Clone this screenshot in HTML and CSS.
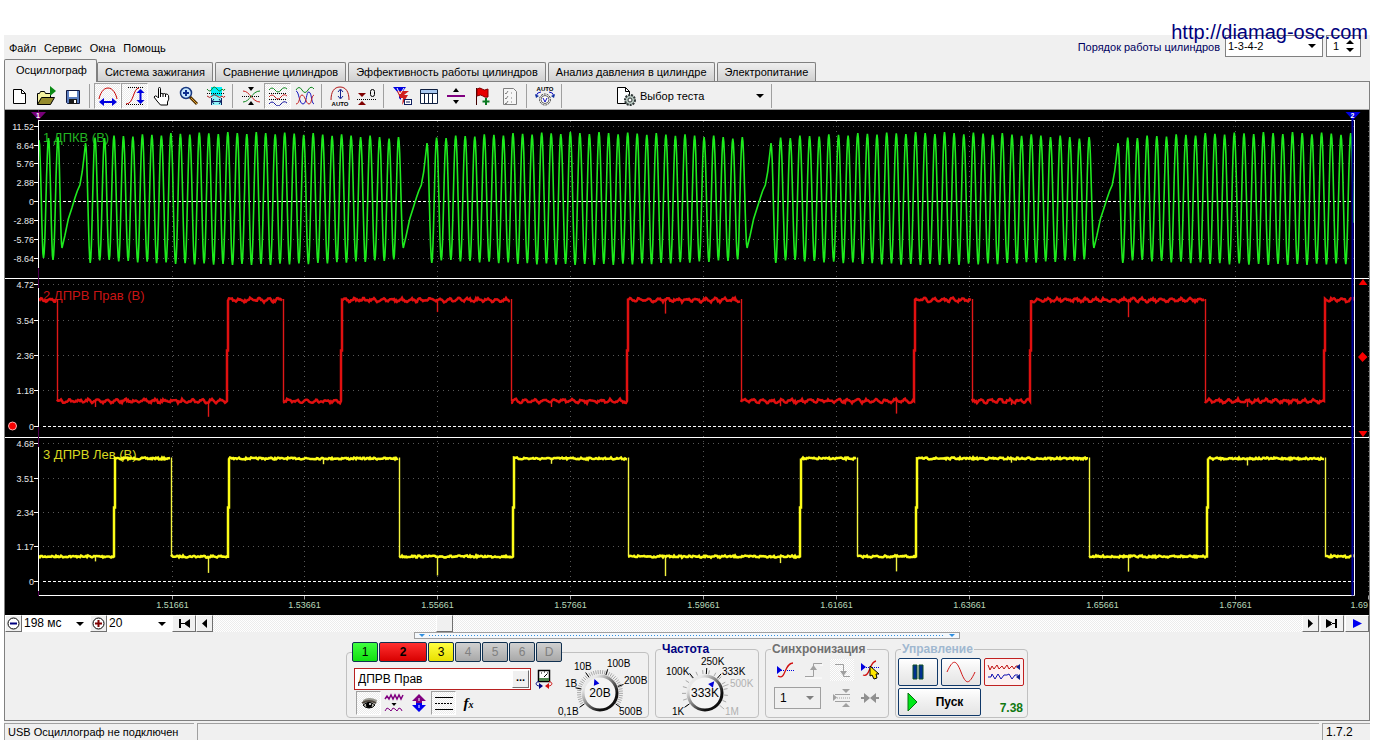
FILE: index.html
```html
<!DOCTYPE html>
<html lang="ru">
<head>
<meta charset="utf-8">
<title>USB Осциллограф</title>
<link rel="stylesheet" href="styles.css">
</head>
<body>
<a class="site" href="#">http://diamag-osc.com</a>
<div class="window">
  <header class="top">
    <nav class="menu">
      <button>Файл</button><button>Сервис</button><button>Окна</button><button>Помощь</button>
    </nav>
    <div class="order">
      <label for="order">Порядок работы цилиндров</label>
      <span class="dd order-dd"><select id="order"><option>1-3-4-2</option></select></span>
      <span class="spin"><input type="text" value="1" aria-label="Цилиндр"><svg width="8" height="14"><path d="M0 5L4 1L8 5zM0 9L4 13L8 9z"/></svg></span>
    </div>
  </header>
  <nav class="tabs">
    <button class="tab active">Осциллограф</button>
    <button class="tab">Система зажигания</button>
    <button class="tab">Сравнение цилиндров</button>
    <button class="tab">Эффективность работы цилиндров</button>
    <button class="tab">Анализ давления в цилиндре</button>
    <button class="tab">Электропитание</button>
  </nav>
  <main class="page">
    <div class="toolbar">
      <button class="tool" aria-label="Новый"><svg viewBox="0 0 20 20"><path d="M4.500 3.500h8l4 4v10h-12z" fill="#fff" stroke="#000"/><path d="M12.500 3.500v4h4" fill="none" stroke="#000"/></svg></button>
      <button class="tool" aria-label="Открыть"><svg viewBox="0 0 20 20"><path d="M1.500 18.500v-11h2l1-2h4l1 2h5v4" fill="#f3f0a0" stroke="#000"/><path d="M1.500 18.500l4-7h13l-4 7z" fill="#948a2c" stroke="#000"/><path d="M14 0l6 5l-6 5z" fill="#0a8a14"/></svg></button>
      <button class="tool" aria-label="Сохранить"><svg viewBox="0 0 20 20"><path d="M3.500 4.500h13v13h-12l-1-1z" fill="#5c7fc0" stroke="#101840"/><path d="M6 5h8v6H6z" fill="#fff"/><path d="M6 13h8v5H6z" fill="#181818"/><path d="M11 14h2v3h-2z" fill="#fff"/></svg></button>
      <i class="sep"></i>
      <button class="tool on" aria-label="Авто X"><svg viewBox="0 0 20 20"><path d="M1 13C2 8 5 2 10 2S18 8 19 13" fill="none" stroke="#c80000"/><path d="M1 16l5-4v3h8v-3l5 4l-5 4v-3H6v3z" fill="#0000e0"/></svg></button>
      <button class="tool on" aria-label="Авто Y"><svg viewBox="0 0 20 20"><path d="M3 1.500h16M1 18.500h18" stroke="#000" stroke-dasharray="1 1"/><path d="M1 18c8 0 7-16 13-16" fill="none" stroke="#c80000"/><path d="M15.500 3l4 4h-3v7h3l-4 4l-4-4h3V7h-3z" fill="#0000e0"/></svg></button>
      <button class="tool" aria-label="Рука"><svg viewBox="0 0 20 20"><path d="M6.500 12V2.500q0-1 1-1t1 1V8q1.500-1.500 2.500 0q1.500-1 2.500 0q2-.5 3 1.500q1 4-1 6.500v3h-7L5 15L2 11q1-2 3-.5z" fill="#fff" stroke="#000"/><path d="M8.500 8v3M11 8v3M13.500 8v3" stroke="#000"/></svg></button>
      <button class="tool" aria-label="Масштаб"><svg viewBox="0 0 20 20"><circle cx="7" cy="7" r="5.500" fill="#c8e8ff" stroke="#183880" stroke-width="1.500"/><path d="M7 4v6M4 7h6" stroke="#103090" stroke-width="2"/><path d="M11 11l7 7" stroke="#503000" stroke-width="3"/><path d="M12 12l6 6" stroke="#e0a030"/></svg></button>
      <button class="tool" aria-label="Выделение"><svg viewBox="0 0 20 20"><path d="M5 1h11v9H5z" fill="#00f0f8"/><path d="M6 10h9v9H6z" fill="#90f4f8"/><path d="M1 3q3 4 5 0t5 0t5 0q2 3 3 0" fill="none" stroke="#108020"/><path d="M1 7.500h18" stroke="#000" stroke-dasharray="1 1"/><path d="M1 10q3 3 5 0t5 0t5 0q2 3 3 0" fill="none" stroke="#b02020"/><path d="M5.500 12v7M15.500 12v7M6 15.500h9M8 13l-2 2.500l2 2.500M13 13l2 2.500l-2 2.500" fill="none" stroke="#102060"/></svg></button>
      <i class="sep"></i>
      <button class="tool" aria-label="Сжать"><svg viewBox="0 0 20 20"><path d="M7 1h6l-3 4zM7 19h6l-3-4z"/><path d="M1 10.500h18" stroke="#000" stroke-dasharray="1 1"/><path d="M2 5c7 0 9 11 17 11" fill="none" stroke="#c82020"/><path d="M2 16c7 0 9-11 17-11" fill="none" stroke="#108820"/></svg></button>
      <button class="tool on" aria-label="Раздельно"><svg viewBox="0 0 20 20"><path d="M1 4q3-4 6 0t6 0t6-1" fill="none" stroke="#108820"/><path d="M1 7.500h18M1 13.500h18" stroke="#000" stroke-dasharray="1 1"/><path d="M1 11q3-4 6 0t6 0t6-1" fill="none" stroke="#c82020"/><path d="M1 18q3-4 6 0t6 0t6-1" fill="none" stroke="#1818a0"/></svg></button>
      <button class="tool" aria-label="Вместе"><svg viewBox="0 0 20 20"><path d="M1 4q3-5 6 0t6 0t6-1" fill="none" stroke="#108820"/><path d="M1 5c3 0 3 13 7 13S11 5 14 6s2 11 5 12" fill="none" stroke="#1818c0"/><path d="M1 18c4 0 3-9 6-9s4 9 7 9s2-8 5-9" fill="none" stroke="#c82020"/></svg></button>
      <i class="sep"></i>
      <button class="tool" aria-label="Авто"><svg viewBox="0 0 20 20"><path d="M1 14C1 6 4 1 10 1s9 5 9 13" fill="none" stroke="#b01818"/><path d="M10.500 4v8M8 6l2.500-3L13 6M8 10l2.500 3l2.500-3" fill="none" stroke="#102090"/><text x="10" y="20" class="auto">AUTO</text></svg></button>
      <button class="tool" aria-label="Ноль"><svg viewBox="0 0 20 20"><path d="M1 7h8l-4 4zM1 19h8l-4-4z" fill="#800000"/><path d="M0 13.500h20" stroke="#000" stroke-dasharray="1 1"/><rect x="13.500" y="3.500" width="4" height="7" rx="2" fill="none" stroke="#000"/></svg></button>
      <i class="sep"></i>
      <button class="tool" aria-label="Фильтр"><svg viewBox="0 0 20 20"><path d="M1 1h13l-5 7v6l-2-2V8z" fill="#0000e0"/><path d="M5 5h12l-5 4h4l-6 10l1-7H8z" fill="#d02020"/><path d="M5 2l3 6l4-6" fill="none" stroke="#fff"/><rect x="12.500" y="13.500" width="7" height="5" fill="#fff" stroke="#102060"/><path d="M14 16h4" stroke="#102060"/></svg></button>
      <button class="tool" aria-label="Таблица"><svg viewBox="0 0 20 20"><path d="M1.500 3.500h17v14h-17z" fill="#fff" stroke="#102040"/><path d="M2 4h16v3H2z" fill="#a8c8f0"/><path d="M2 7.500h16M5.500 7v10M9.500 7v10M13.500 7v10" stroke="#102040"/></svg></button>
      <button class="tool" aria-label="Линейка"><svg viewBox="0 0 20 20"><path d="M7 6h6l-3-4zM7 14h6l-3 4z"/><path d="M1 10h18" stroke="#800080" stroke-width="2"/></svg></button>
      <button class="tool" aria-label="Флаг"><svg viewBox="0 0 20 20"><path d="M3.500 2v17" stroke="#400000"/><path d="M4 3q3-2 5 0t6 0v8q-3 1-5-1t-6 0z" fill="#e80000" stroke="#800000"/><path d="M13 12v7M9.500 15.500h7" stroke="#087820" stroke-width="2"/></svg></button>
      <button class="tool" aria-label="Список"><svg viewBox="0 0 20 20"><path d="M3.500 2.500h10l3 3v13h-13z" fill="#f6f6f6" stroke="#808080"/><path d="M5 7l1 1l2-3M5 12l1 1l2-3M5 17l1 1l2-3M11 7h1M11 12h1M11 16h1" fill="none" stroke="#808080"/></svg></button>
      <i class="sep"></i>
      <button class="tool" aria-label="Автонастройка"><svg viewBox="0 0 20 20"><text x="10" y="5" class="auto">AUTO</text><circle cx="10" cy="13.500" r="5.500" fill="#fff" stroke="#303030" stroke-dasharray="2 1"/><circle cx="10" cy="13.500" r="4" fill="#fff" stroke="#606060"/><path d="M8 12l2 4l2-4" fill="none" stroke="#1010c0"/><path d="M1 10q1-4 5-4M19 10q-1-4-5-4" fill="none" stroke="#1010c0"/><path d="M0 8l1 4l3-2zM20 8l-1 4l-3-2z" fill="#1030a0"/></svg></button>
      <i class="sep"></i>
      <button class="test"><svg width="21" height="20"><path d="M1.500 1.500h8l4 4v12h-12z" fill="#fff" stroke="#000"/><path d="M9.500 1.500v4h4" fill="none" stroke="#000"/><circle cx="14" cy="14" r="5" fill="#b8c8c0" stroke="#303838" stroke-width="2" stroke-dasharray="2 1"/><circle cx="14" cy="14" r="2" fill="#fff" stroke="#303838"/></svg><span>Выбор теста</span><b class="arrow"></b></button>
      <i class="sep"></i>
    </div>
    <div class="chart" id="chart"></div>
    <div class="nav">
      <button class="nb small" aria-label="Уменьшить"><svg width="13" height="13"><circle cx="6.500" cy="6.500" r="5.500" fill="#fff" stroke="#000"/><path d="M3 6.500h7" stroke="#000080" stroke-width="2"/></svg></button>
      <span class="dd nav-dd first"><select aria-label="Развёртка"><option>198 мс</option></select></span>
      <button class="nb small" aria-label="Увеличить"><svg width="13" height="13"><circle cx="6.500" cy="6.500" r="5.500" fill="#fff" stroke="#000"/><path d="M3 6.500h7M6.500 3v7" stroke="#800000" stroke-width="2"/></svg></button>
      <span class="dd nav-dd"><select aria-label="Масштаб"><option>20</option></select></span>
      <button class="nb" aria-label="В начало"><svg width="12" height="9"><path d="M1 0h2v9H1zM12 0v9L7 5.500v-2z M3 4h5v1H3z"/></svg></button>
      <button class="nb small" aria-label="Назад"><svg width="5" height="9"><path d="M5 0v9L0 4.500z"/></svg></button>
      <input class="scroll" type="range" min="0" max="1000" value="208" aria-label="Прокрутка">
      <button class="nb small" aria-label="Вперёд"><svg width="5" height="9"><path d="M0 0v9L5 4.500z"/></svg></button>
      <button class="nb gap" aria-label="В конец"><svg width="12" height="9"><path d="M9 0h2v9H9zM0 0v9L6 5.500v-2z M5 4h4v1H5z"/></svg></button>
      <button class="nb gap" aria-label="Воспроизвести"><svg width="9" height="9"><path d="M0 0v9L9 4.500z" fill="#0000f0"/></svg></button>
    </div>
    <div class="splitter"><b></b><i></i><b></b></div>
    <div class="controls">
      <fieldset class="group channels">
        <legend class="chan-row">
          <button class="ch g">1</button><button class="ch r">2</button><button class="ch y">3</button><button class="ch" disabled>4</button><button class="ch" disabled>5</button><button class="ch" disabled>6</button><button class="ch" disabled>D</button>
        </legend>
        <div class="chan-body">
          <div class="chan-left">
            <div class="name-row">
              <span class="name"><input type="text" value="ДПРВ Прав" aria-label="Имя канала"><button aria-label="Выбрать">...</button></span>
              <svg width="18" height="20"><path d="M3.500 1.500h11v11h-11z" fill="#fff" stroke="#000" stroke-width="1.500"/><path d="M4 9h10v3H4z" fill="#508850"/><path d="M6 4h1M9 3h1M12 4h1M9 8l3-3" stroke="#000"/><path d="M4 12.500C0 13 0 17 5 17" fill="none" stroke="#000080"/><path d="M4 14l4 3l-4 3z" fill="#000080"/><path d="M14 12.500c4 .5 4 4.500-1 4.500" fill="none" stroke="#d01010"/><path d="M14 14l-4 3l4 3z" fill="#d01010"/></svg>
            </div>
            <div class="icon-row">
              <button class="ib on" aria-label="Показать"><svg viewBox="0 0 20 20"><path d="M4 7q6-4 14 0l-1 4q-6-4-13 0z" fill="#989890"/><path d="M4 12q6-5 12 0q-2 3-6 3t-6-3z" fill="#b8b8b0" stroke="#000"/><path d="M3 10q7-4 14 0" fill="none" stroke="#504840" stroke-width="2"/><circle cx="10" cy="12" r="3"/><circle cx="11" cy="11" r="1" fill="#fff"/></svg></button>
              <button class="ib" aria-label="Сглаживание"><svg viewBox="0 0 20 20"><path d="M1 6l2-3l2 3l2-4l2 4l2-4l2 4l2-4l2 4l2-4" fill="none" stroke="#800080" stroke-width="1.500"/><path d="M7.500 10h5L10 13z"/><path d="M1 18l2-3l2 1l2 2l2-3l2 1l2 2l2-3l2 1l1 2" fill="none" stroke="#800080"/></svg></button>
              <button class="ib" aria-label="Инвертировать"><svg viewBox="0 0 20 20"><path d="M10 1l7 7h-4v2H7V8H3z" fill="#800080"/><path d="M3 12h4v-2h6v2h4l-7 7z" fill="#0000f0"/><path d="M10 5v3M10 12v3" stroke="#fff"/></svg></button>
              <button class="ib on" aria-label="Линии"><svg viewBox="0 0 20 20"><path d="M1 4.500h18M1 16.500h18" stroke="#000"/><path d="M1 10.500h18" stroke="#000" stroke-dasharray="2 1"/></svg></button>
              <button class="ib fx" aria-label="Функция"><i>f</i><small>x</small></button>
            </div>
          </div>
          <svg class="knob" id="volt" width="96" height="66" role="img" aria-label="20В"></svg>
        </div>
      </fieldset>
      <fieldset class="group freq"><legend>Частота</legend>
        <svg class="knob" id="rate" width="96" height="66" role="img" aria-label="333K"></svg>
      </fieldset>
      <fieldset class="group sync"><legend>Синхронизация</legend>
        <div class="sync-grid">
          <button class="sb" aria-label="Уровень"><svg viewBox="0 0 20 20"><path d="M2 6v8l5-4z" fill="#0000e0"/><path d="M2 10.500h17" stroke="#0000e0" stroke-dasharray="1 1"/><path d="M3 16c8 5 6-13 15-13" fill="none" stroke="#d01010" stroke-width="1.300"/></svg></button>
          <button class="sb" disabled aria-label="Фронт"><svg viewBox="0 0 20 20"><path d="M1 16.500h8.500v-13H18" fill="none" stroke="#a0a0a0"/><path d="M2 18h16M16 5h3" stroke="#fff"/><path d="M6 10h7L9.500 5z" fill="#a0a0a0"/></svg></button>
          <button class="sb hatch" disabled aria-label="Спад"><svg viewBox="0 0 20 20"><path d="M3 4.500h8.500v12H18" fill="none" stroke="#a0a0a0"/><path d="M8 11h7l-3.500 5z" fill="#a0a0a0"/></svg></button>
          <button class="sb" aria-label="Авто"><svg viewBox="0 0 20 20"><path d="M1 3v8l5-4z" fill="#0000e0"/><path d="M2 7.500h17" stroke="#0000e0" stroke-dasharray="1 1"/><path d="M3 15c7 3 6-13 13-14" fill="none" stroke="#d01010" stroke-width="1.300"/><path d="M10 6v10l2-1l2 4l3-1l-1-4h3z" fill="#ffe800" stroke="#000"/></svg></button>
          <span class="dd sync-dd"><select aria-label="Канал"><option>1</option></select></span>
          <button class="sb" disabled aria-label="Гистерезис"><svg viewBox="0 0 20 20"><path d="M1 6v7l4-3.500zM10 1h8l-4 4zM10 19h8l-4-4z" fill="#a0a0a0"/><path d="M3 6.500h15M3 13.500h15" stroke="#a0a0a0"/><path d="M5 10h13" stroke="#a0a0a0" stroke-dasharray="1 1"/></svg></button>
          <button class="sb" disabled aria-label="Сжать"><svg viewBox="0 0 20 20"><path d="M1 9h3V5l6 5l-6 5v-4H1zM19 9h-3V5l-6 5l6 5v-4h3z" fill="#909090"/></svg></button>
        </div>
      </fieldset>
      <fieldset class="group run"><legend>Управление</legend>
        <div class="run-grid">
          <button class="rb" aria-label="Пауза"><svg width="12" height="16"><path d="M1 1h4v14H1zM7 1h4v14H7z" fill="#003090" stroke="#105020"/></svg></button>
          <button class="rb" aria-label="Синус"><svg width="32" height="22"><path d="M2 11C8-2 11-2 16 11s8 13 14 0" fill="none" stroke="#d01818"/></svg></button>
          <button class="rb red" aria-label="Запись"><svg width="34" height="22"><path d="M1 4l2 5l2-4l2 3l3-4l2 4l3-3l2 3l3-4l2 4l3-3l2 3l2-3h2" fill="none" stroke="#c01010"/><path d="M1 16h3l1-3l3 5l3-5l3 5l3-4h3l2-1l3 5l3-4h3" fill="none" stroke="#1010b0"/><path d="M33 3v6l-4-3zM33 13v6l-4-3z" fill="#102090"/></svg></button>
          <button class="rb start"><svg width="12" height="20"><path d="M1 1v18l9-9z" fill="#00e818" stroke="#087010"/></svg><span>Пуск</span></button>
          <output>7.38</output>
        </div>
      </fieldset>
    </div>
  </main>
  <footer class="status"><span class="s1">USB Осциллограф не подключен</span><span class="s2"></span><span class="s3">1.7.2</span></footer>
</div>
<script src="chart.js"></script>
</body>
</html>
```

FILE: styles.css
```css
* { box-sizing: border-box; }
body {
  margin: 0;
  min-height: 100vh;
  display: flex;
  padding: 35px 12px 4px 4px;
  background: #fff;
  color: #000;
  font: 11px/13px "Liberation Sans", Arial, sans-serif;
}
button, input, select { font: inherit; color: inherit; margin: 0; }
button { padding: 0; border: 0; background: none; }
select { appearance: none; border: 0; background: none; width: 100%; padding: 0 14px 0 2px; font-size: 12px; border-radius: 0; }
svg { display: block; flex: none; }
.site {
  position: absolute;
  right: 14px;
  top: 20px;
  font-size: 20px;
  line-height: 24px;
  color: #00007c;
  text-decoration: none;
  z-index: 2;
}
.window { flex: 1; min-width: 0; display: flex; flex-direction: column; background: #f0f0f0; }

.top { display: flex; justify-content: space-between; height: 25px; }
.menu { display: flex; gap: 8px; padding: 6px 0 0 5px; }
.menu button { height: 14px; line-height: 14px; }
.order { display: flex; align-items: flex-start; padding-right: 9px; }
.order label { color: #000060; padding: 6px 5px 0 0; }
.dd { position: relative; display: flex; align-items: center; }
.dd::after, .arrow {
  content: "";
  border: 4px solid transparent;
  border-top-color: #000;
  border-bottom: 0;
}
.dd::after { position: absolute; right: 6px; pointer-events: none; }
.order-dd { width: 98px; height: 22px; border: 1px solid #808080; background: #fff; margin-right: 3px; }
.order-dd select { font-size: 11px; }
.spin { display: flex; align-items: center; width: 35px; height: 22px; border: 1px solid #808080; background: #fff; }
.spin input { width: 19px; border: 0; padding: 0 0 0 6px; background: none; }

.tabs { display: flex; align-items: flex-end; gap: 2px; height: 21px; }
.tab {
  height: 19px;
  padding: 1px 7px 0;
  border: 1px solid #808080;
  border-bottom: 0;
  border-radius: 2px 2px 0 0;
  background: linear-gradient(#efefef, #d0d0d0);
  white-space: nowrap;
}
.tab.active { position: relative; height: 23px; margin: 0 -2px -1px 0; padding: 0 9px 2px 11px; background: #f0f0f0; }

.page { flex: 1; display: flex; flex-direction: column; border: 1px solid #808080; min-width: 0; }
.toolbar { display: flex; align-items: center; height: 28px; border-bottom: 1px solid #a0a0a0; }
.tool { display: flex; align-items: center; justify-content: center; width: 27px; height: 26px; }
.tool svg { width: 20px; height: 20px; }
.on, .hatch { background: repeating-conic-gradient(#fff 0 25%, #eaeaea 0 50%) 0 0 / 2px 2px; }
.tool.on, .ib.on { border: 1px solid; border-color: #a0a0a0 #fff #fff #a0a0a0; }
.auto { font: bold 6px "Liberation Sans", sans-serif; text-anchor: middle; }
.sep { width: 8px; height: 24px; border-left: 1px solid #a0a0a0; margin-left: 3px; margin-right: -3px; }
.test { display: flex; align-items: center; width: 202px; padding-left: 50px; height: 24px; }
.test svg { margin-right: 3px; }
.test span { flex: 1; text-align: left; padding-top: 1px; }
.test .arrow { margin-right: 4px; }

.chart { flex: 1; min-height: 300px; background: #000; overflow: hidden; }
.axis { font-size: 9px; fill: #e8e8e8; }
.time { font-size: 9px; fill: #b8d8b8; }
.title { font-size: 13px; }
.mark { font-size: 7px; font-weight: bold; fill: #fff; }

.nav { display: flex; height: 17px; }
.nb {
  display: flex; align-items: center; justify-content: center;
  width: 24px; height: 17px; background: #f0f0f0;
  border: 1px solid; border-color: #fff #707070 #707070 #fff;
}
.nb.small { width: 17px; }
.nb.gap { margin-left: 1px; }
.nav-dd { width: 65px; background: #fff; }
.nav-dd.first { width: 68px; }
.scroll {
  appearance: none; flex: 1; min-width: 0; height: 17px;
  background: repeating-conic-gradient(#fff 0 25%, #ececec 0 50%) 0 0 / 2px 2px;
}
.scroll::-webkit-slider-thumb {
  appearance: none; width: 17px; height: 17px; background: #f0f0f0; border-radius: 0;
  border: 1px solid; border-color: #fff #707070 #707070 #fff;
}

.splitter { align-self: center; display: flex; align-items: center; gap: 4px; width: 546px; height: 7px; border: 1px solid #a0a0a0; padding: 0 4px; background: #f4f8fc; }
.splitter i { flex: 1; height: 1px; background: repeating-linear-gradient(90deg, #3090e0 0 1px, transparent 1px 3px); }
.splitter b { border: 3px solid transparent; border-top-color: #3090e0; border-bottom: 0; }

.controls { display: flex; justify-content: center; gap: 6px; padding: 3px 0 2px; }
.group { margin: 0; padding: 0; border: 1px solid #c0c0c0; border-radius: 4px; height: 76px; min-width: 0; }
.group legend { font-weight: bold; font-size: 12px; line-height: 14px; height: 14px; padding: 0 1px; margin-left: 5px; }
.channels { width: 303px; }
.group .chan-row { display: flex; gap: 1px; height: 20px; padding: 0; margin-left: 5px; font-weight: normal; }
.ch {
  width: 26px; height: 20px; border: 1px solid #103050; border-radius: 2px;
  background: linear-gradient(#d0d0d0, #a8a8a8); font-size: 12px; color: #000;
}
.ch:disabled { color: #808080; }
.ch.g { background: linear-gradient(#40ff40, #10e010); }
.ch.r { width: 48px; background: linear-gradient(#ff3030, #d80000); font-weight: bold; }
.ch.y { background: linear-gradient(#ffff40, #e8e000); }
.chan-body { display: flex; }
.chan-left { width: 207px; padding: 6px 0 0 7px; }
.name-row { display: flex; gap: 4px; height: 22px; align-items: center; }
.name { display: flex; width: 177px; height: 22px; border: 1px solid #b82020; background: #fff; padding: 1px; }
.name input { flex: 1; min-width: 0; border: 0; padding: 0 2px; background: none; font-size: 12px; }
.name button { width: 17px; background: #f0f0f0; border: 1px solid; border-color: #fff #707070 #707070 #fff; line-height: 8px; padding-bottom: 5px; font-weight: bold; }
.icon-row { display: flex; padding: 1px 0 0 2px; }
.ib { display: flex; align-items: center; justify-content: center; width: 25px; height: 24px; }
.ib svg { width: 20px; height: 20px; }
.fx { font: bold 15px "Liberation Serif", serif; font-style: italic; }
.fx small { font-size: 10px; padding-top: 3px; }
.knob { overflow: visible; }
.channels .knob { margin-top: -6px; }
.knob text { font-size: 10px; }
.knob .value { font-size: 12px; }
.freq { width: 104px; }
.freq legend { color: #000080; }
.sync { width: 124px; }
.sync legend { color: #707070; }
.run { width: 133px; }
.run legend { color: #a0b8d0; }
.sync-grid { display: grid; grid-template-columns: 30px 28px 28px 28px; grid-template-rows: 28px 28px; align-items: center; justify-content: center; }
.sb { display: flex; align-items: center; justify-content: center; width: 24px; height: 22px; justify-self: center; }
.sb svg { width: 20px; height: 20px; }
.sync-dd { grid-column: 1 / 3; width: 47px; height: 22px; margin-left: 4px; border: 1px solid #a0a0a0; }
.sync-dd select { padding-left: 5px; }
.sync-dd::after { border-top-color: #808080; }
.run-grid { display: grid; grid-template-columns: 40px 40px 40px; grid-template-rows: 28px 28px; gap: 2px 3px; padding: 2px; }
.rb { display: flex; align-items: center; justify-content: center; border: 1px solid #103868; border-radius: 2px; background: linear-gradient(#fff, #f0f0f0 50%, #e4e4e4); }
.rb.red { border-color: #c02020; background: #fdf0f0; }
.rb.start { grid-column: 1 / 3; font-weight: bold; font-size: 12px; justify-content: flex-start; padding-left: 8px; }
.start span { flex: 1; }
.run output { color: #107810; font-weight: bold; font-size: 12px; align-self: center; text-align: right; padding: 12px 1px 0 0; }

.status { display: flex; gap: 3px; height: 19px; padding-top: 2px; }
.status span { border-top: 1px solid #a0a0a0; border-left: 1px solid #a0a0a0; padding: 2px 3px 0; }
.s1 { width: 190px; white-space: nowrap; }
.s2 { flex: 1; }
.s3 { width: 48px; font-size: 12px; }
```

FILE: chart.js
```javascript
const NS = "http://www.w3.org/2000/svg";

function add(parent, tag, attrs, text) {
  const e = document.createElementNS(NS, tag);
  for (const k in attrs) e.setAttribute(k, attrs[k]);
  if (text !== undefined) e.textContent = text;
  parent.appendChild(e);
  return e;
}

const PANES = [
  { title: "1 ДПКВ (В)", color: "#22b422", top: 10, ty: 32,
    ticks: [["11.52", 16], ["8.64", 35], ["5.76", 53], ["2.88", 72], ["0", 91], ["-2.88", 110], ["-5.76", 129], ["-8.64", 148]] },
  { title: "2 ДПРВ Прав (В)", color: "#c81414", top: 168, ty: 190,
    ticks: [["4.72", 174], ["3.54", 210], ["2.36", 245], ["1.18", 280], ["0", 316]] },
  { title: "3 ДПРВ Лев (В)", color: "#d8d820", top: 327, ty: 349,
    ticks: [["4.68", 333], ["3.51", 368], ["2.34", 402], ["1.17", 436], ["0", 471]] }
];
const TIMES = ["1.51661", "1.53661", "1.55661", "1.57661", "1.59661", "1.61661", "1.63661", "1.65661", "1.67661", "1.69"];

// Crankshaft sensor: 33 equal teeth, then a long ramp over the missing ones.
function crank() {
  const pts = [];
  // Half a tooth as a cosine arc down or up to the next extreme.
  const arc = (x, y) => {
    const [px, py] = pts[pts.length - 1];
    for (let i = 1; i <= 8; i++) pts.push([px + (x - px) * i / 8, py + (y - py) * (1 - Math.cos(Math.PI * i / 8)) / 2]);
  };
  const starts = [80.5, 422, 766, 1113, 1462];
  pts.push([34, 30]);
  [[38.5, 148], [43.5, 28], [48, 150], [53, 27], [57, 138]].forEach(p => arc(p[0], p[1]));
  starts.forEach((s, g) => {
    const v = pts[pts.length - 1][0];
    [[.12, 126], [.27, 109], [.42, 98], [.55, 88], [.65, 81], [.76, 75], [.86, 62], [.93, 48]].forEach(p => pts.push([v + (s - v) * p[0], p[1]]));
    pts.push([s, 33]);
    if (g === starts.length - 1) return;
    const step = (starts[g + 1] - s) / 36;
    for (let i = 0; i < 34; i++) {
      const swell = Math.sin(Math.PI * Math.min(i, 33) / 33);
      if (i > 0) arc(s + i * step, 28 - swell * 5 + (i % 3) - 1);
      arc(s + (i + .5) * step, i === 0 ? 153 : i === 33 ? 138 : 149 + swell * 5 + (i % 2));
    }
  });
  return pts.filter(p => p[0] <= 1349);
}

// Camshaft sensor: square levels with ripple, noise and ignition spikes.
// Falling edges are kept apart because they are drawn thinner.
function cam(edges, first, hi, lo, ripple, noise, spikes) {
  let seed = 7, level = first, k = 0, run = [];
  const rnd = () => (seed = (seed * 16807) % 2147483647) / 2147483647;
  const runs = [run], thin = [];
  for (let x = 34; x <= 1349; x++) {
    if (k < edges.length && x >= edges[k]) {
      if (level) {
        thin.push([[x + .5, hi - 1], [x + .5, lo]]);
        runs.push(run = []);
      } else {
        const mid = (hi + lo) / 2;
        run.push([x, lo], [x, mid], [x + 1, mid], [x + 1, hi]);
        x++;
      }
      level = !level;
      k++;
    }
    const y = (level ? hi : lo) + Math.sin(x / 9.5 * 2 * Math.PI) * ripple + (rnd() - .5) * noise;
    run.push([x, y]);
    if (spikes[x]) thin.push([[x + .5, y], [x + .5, y + spikes[x]]]);
  }
  return { runs, thin };
}
const RED = cam([52, 222, 278, 336, 506, 622, 736, 909, 967, 1025, 1200, 1319], true, 190, 291, 1.3, 2.2,
  { 90: 6, 203: 14, 432: 12, 546: 5, 660: 14, 775: 5, 891: 15, 1006: 5, 1123: 16, 1242: 7 });
const YELLOW = cam([109, 166, 223, 394, 508, 623, 795, 852, 911, 1084, 1202, 1320], false, 348.5, 446.5, .2, 1.8,
  { 90: 5, 203: 16, 318: 6, 432: 19, 546: 5, 660: 20, 775: 6, 891: 15, 1006: 5, 1123: 15, 1242: 7 });
const TRACES = [
  { color: "#1eea1e", width: 1.6, runs: [crank()] },
  { color: "#e01010", width: 2.5, runs: RED.runs },
  { color: "#e01818", width: 1.4, runs: RED.thin },
  { color: "#fcfc18", width: 2.5, runs: YELLOW.runs },
  { color: "#f4f440", width: 1.4, runs: YELLOW.thin }
];

function draw() {
  const box = document.getElementById("chart");
  box.textContent = "";
  const W = box.clientWidth, H = box.clientHeight;
  const kx = (W - 49) / 1315, ky = H / 505;
  const X = x => 34 + (x - 34) * kx, Y = y => y * ky;
  const svg = add(box, "svg", { role: "img", "aria-label": "Осциллограмма", width: W, height: H });
  const R = Math.round(X(1349)) + .5, B = Math.round(Y(485)) + .5;
  const line = (x1, y1, x2, y2, stroke, extra) => add(svg, "path", Object.assign({ d: `M${x1} ${y1}L${x2} ${y2}`, stroke, fill: "none" }, extra));

  TIMES.forEach((t, i) => {
    const x = Math.round(X(166.5 + i * 132.9)) + .5, last = i === TIMES.length - 1;
    line(x, Y(11), x, B, "#585858", { "stroke-dasharray": "1 4" });
    line(x, B, x, B + 4, "#a0a0a0");
    add(svg, "text", { x: last ? W - 1 : x, y: B + 12, class: "time", "text-anchor": last ? "end" : "middle" }, t);
  });
  PANES.forEach(p => {
    p.ticks.forEach(([t, v]) => {
      const y = Math.round(Y(v)) + .5, zero = t === "0";
      line(38, y, R, y, zero ? "#fff" : "#585858", { "stroke-dasharray": zero ? "3 2" : "1 4" });
      line(29, y, 34, y, "#fff");
      add(svg, "text", { x: 29, y: y + 3, class: "axis", "text-anchor": "end" }, t);
    });
    const y = Math.round(Y(p.top)) + .5;
    line(p.top === 10 ? 33 : 0, y, p.top === 10 ? R : W, y, "#fff");
    add(svg, "text", { x: 38, y: Y(p.ty), class: "title", fill: p.color }, p.title);
  });
  TRACES.forEach(t => t.runs.forEach(run => add(svg, "polyline", {
    points: run.map(p => X(p[0]).toFixed(1) + "," + Y(p[1]).toFixed(1)).join(" "),
    fill: "none", stroke: t.color, "stroke-width": t.width
  })));
  line(33.5, Y(10), 33.5, B, "#fff");
  line(33, B, R, B, "#fff");
  line(R, Y(10), R, B, "#fff");
  line(R - 2, Y(5), R - 2, B, "#0000a0", { "stroke-width": 2 });
  [[0, 10], [158, 178], [317, 337], [481, 486]].forEach(s => line(33.5, Y(s[0]), 33.5, Y(s[1]), "#500050"));
  add(svg, "path", { d: "M26 2h15l-7.500 8z", fill: "#780078" });
  add(svg, "text", { x: 33, y: 8, class: "mark", "text-anchor": "middle" }, "1");
  add(svg, "path", { d: `M${R - 9} 2h15l-7.500 8z`, fill: "#0000e0" });
  add(svg, "text", { x: R - 2, y: 8, class: "mark", "text-anchor": "middle" }, "2");
  const m = R + 8;
  add(svg, "path", { fill: "#f80000", d: `M${m - 4} ${Y(175)}h9l-4.500-6zM${m - 4} ${Y(321)}h9l-4.500 6zM${m - 4.5} ${Y(247)}l4.500-5l5 5l-5 5z` });
  add(svg, "circle", { cx: 7.5, cy: Y(316), r: 4, fill: "#f80000", stroke: "#ffb0b0" });
}

function knob(id, cx, cy, value, angle, labels) {
  const s = document.getElementById(id);
  const defs = add(s, "linearGradient", { id: id + "-rim", x1: 0, y1: 0, x2: 1, y2: 1 });
  add(defs, "stop", { offset: .2, "stop-color": "#e8e8e8" });
  add(defs, "stop", { offset: .75, "stop-color": "#101010" });
  for (let a = 145; a <= 395; a += id === "volt" ? 6 : 17) {
    const r = a * Math.PI / 180, c = Math.cos(r), n = Math.sin(r);
    add(s, "path", { d: `M${cx + c * 19} ${cy + n * 19}L${cx + c * 23} ${cy + n * 23}`, stroke: "#a8a8a8" });
  }
  labels.forEach(([t, x, y, a, dim]) => {
    const r = a * Math.PI / 180, c = Math.cos(r), n = Math.sin(r), color = dim ? "#b0b0b0" : "#000";
    add(s, "path", { d: `M${cx + c * 19} ${cy + n * 19}L${cx + c * 25} ${cy + n * 25}`, stroke: color });
    add(s, "text", { x, y, fill: color }, t);
  });
  add(s, "circle", { cx, cy, r: 17, fill: "#f4f4f4", stroke: `url(#${id}-rim)`, "stroke-width": 3 });
  add(s, "path", { d: "M15 0l-6-3v6z", fill: "#0000d8", transform: `translate(${cx} ${cy}) rotate(${angle})` });
  add(s, "text", { x: cx, y: cy + 4, class: "value", "text-anchor": "middle" }, value);
}

knob("volt", 47, 37, "20В", -112, [["0,1В", 5, 59, 145], ["1В", 12, 31, 192], ["10В", 21, 14, 235], ["100В", 54, 11, 288], ["200В", 71, 28, 340], ["500В", 66, 59, 35]]);
knob("rate", 49, 37, "333K", -52, [["1K", 16, 59, 145], ["100K", 10, 19, 232], ["250K", 45, 9, 274], ["333K", 66, 19, 310], ["500K", 74, 31, 340, true], ["1M", 69, 59, 40, true]]);
draw();
window.addEventListener("resize", draw);
```
